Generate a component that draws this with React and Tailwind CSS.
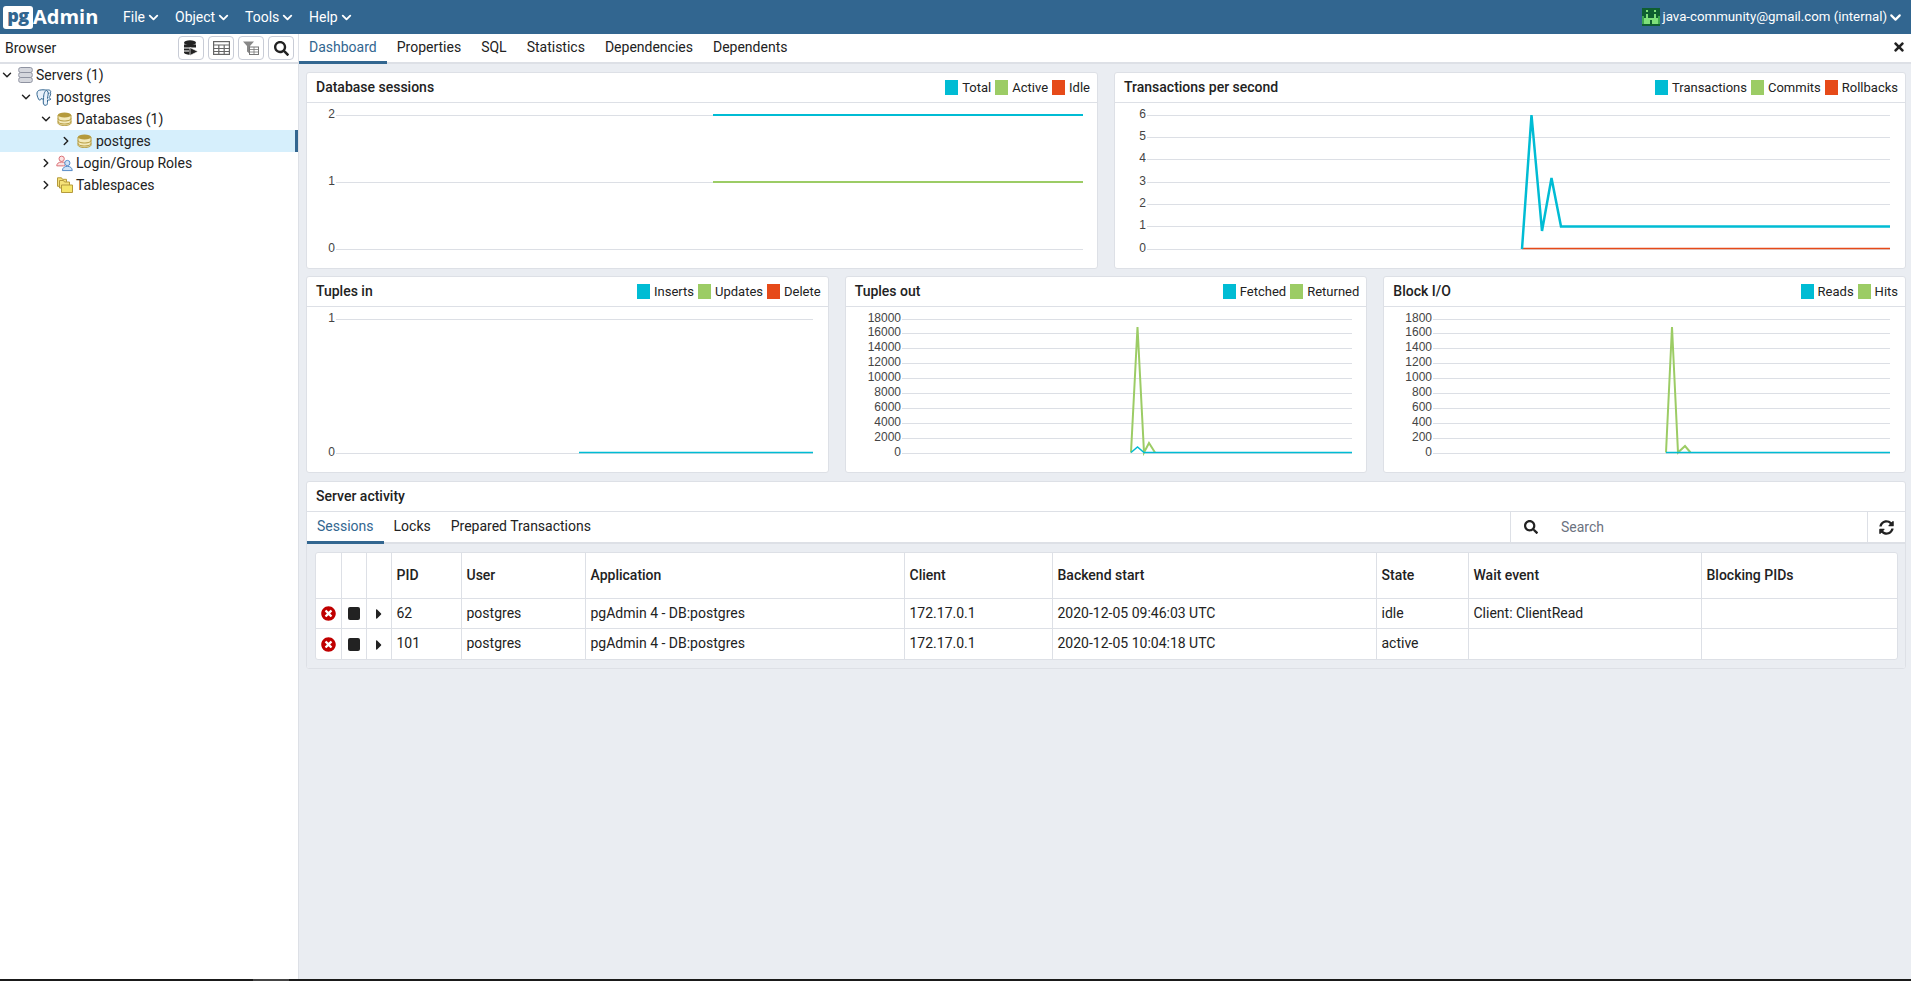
import React from "react";
import { ChevronDown, ChevronRight } from "lucide-react";
import { FaSearch, FaSyncAlt, FaTimes, FaTimesCircle, FaCaretRight } from "react-icons/fa";

const CYAN = "#00bcd4";
const GREEN = "#9ccc65";
const RED = "#e64a19";

function ServersIcon() {
  return (
    <svg width="15" height="16" viewBox="0 0 15 16">
      {[0.5, 5.5, 10.5].map((y) => (
        <rect key={y} x="0.7" y={y} width="13.6" height="5" rx="2" fill="#d5d7dd" stroke="#8f93a1" strokeWidth="1" />
      ))}
    </svg>
  );
}

function DbIcon() {
  return (
    <svg width="15" height="14" viewBox="0 0 15 14">
      <path d="M1 3v8c0 1.4 2.9 2.5 6.5 2.5S14 12.4 14 11V3z" fill="#f3e9ba" stroke="#b59a3c" strokeWidth="1" />
      <path d="M1 6.5c0 1.4 2.9 2.5 6.5 2.5S14 7.900 14 6.500M1 9.500c0 1.400 2.900 2.500 6.500 2.500S14 10.900 14 9.500" fill="none" stroke="#b59a3c" strokeWidth="1" />
      <ellipse cx="7.500" cy="3" rx="6.500" ry="2.500" fill="#b59a3c" />
    </svg>
  );
}

function RolesIcon() {
  return (
    <svg width="18" height="17" viewBox="0 0 18 17">
      <circle cx="6" cy="3.500" r="2.800" fill="#fbe3e3" stroke="#d9686e" strokeWidth="1" />
      <path d="M0.800 11c0-2.500 2-4 5.200-4s4 1 4.500 2.500L8 11z" fill="#fbe3e3" stroke="#d9686e" strokeWidth="1" />
      <circle cx="12" cy="8" r="2.800" fill="#cfe2f6" stroke="#4f86c6" strokeWidth="1" />
      <path d="M6.800 16c0-2.800 2-4.500 5.200-4.500s5.200 1.700 5.200 4.500z" fill="#cfe2f6" stroke="#4f86c6" strokeWidth="1" />
    </svg>
  );
}

function TablespaceIcon() {
  return (
    <svg width="16" height="16" viewBox="0 0 16 16">
      <path d="M0.500 0.800h4l1 1.500h4v7h-9z" fill="#f6e27a" stroke="#b59a3c" />
      <path d="M2.500 3.500h4l1 1.500h5v6h-10z" fill="#f6e27a" stroke="#b59a3c" />
      <path d="M4.500 8h11v7.500h-11z" fill="#f5e56b" stroke="#b59a3c" />
    </svg>
  );
}

function ElephantIcon() {
  return (
    <svg width="17" height="17" viewBox="0 0 17 17" fill="#eaf2fb" stroke="#336791" strokeWidth="1">
      <path d="M3.500 1.200C1.600 1.600.7 3.200 1 5.500c.3 2 1.200 4.500 2.300 5.500.8.700 1.500-.2 2-1.500.8.500 1.500.6 2 .5V14c0 1.500 1 2.500 2.500 2.300 1.300-.2 1.700-1.200 1.700-2.800v-2.500c1.500.3 3-.2 3.500-1-1-.2-1.700-.6-1.800-1.500 1-1.500 1.800-3.500 1.300-5.300C15.500 1.300 12.500.4 10.500 1.200 8.500.6 5.500.7 3.500 1.200z" />
      <path d="M10.500 1.200C8.500 2.500 7.500 5 7.500 10.500M10.500 1.200c1.500 1 2 3 1.500 5-.2 1-.5 2-.5 3.500" fill="none" />
      <circle cx="12.800" cy="4.300" r="0.700" fill="#336791" stroke="none" />
    </svg>
  );
}

function Avatar() {
  return (
    <svg width="18" height="18" viewBox="0 0 9 9" shapeRendering="crispEdges">
      <rect width="9" height="9" fill="#0f5f30" />
      <rect x="2" y="1" width="1" height="1" fill="#7fe07a" />
      <rect x="6" y="1" width="1" height="1" fill="#7fe07a" />
      <rect x="2" y="3" width="1" height="2" fill="#7fe07a" />
      <rect x="6" y="3" width="1" height="2" fill="#7fe07a" />
      <rect x="1" y="5" width="7" height="3" fill="#7fe07a" />
      <rect x="4" y="6" width="1" height="3" fill="#0f5f30" />
      <rect x="0" y="4" width="1" height="4" fill="#3fa84f" />
      <rect x="8" y="4" width="1" height="4" fill="#3fa84f" />
    </svg>
  );
}

function ToolBtn({ children }) {
  return (
    <div className="w-[26px] h-[24px] border border-[#c8ccd6] rounded-[4px] bg-white flex items-center justify-center">
      {children}
    </div>
  );
}

function TreeRow({ level, open, icon, label, selected }) {
  const Chev = open ? ChevronDown : ChevronRight;
  const pad = [0, 19, 39, 59][level];
  return (
    <div
      className={`h-[22px] flex items-center relative ${selected ? "bg-[#d6effc]" : ""}`}
      style={{ paddingLeft: pad }}
    >
      <Chev size={14} strokeWidth={2.5} className="text-[#222] shrink-0" />
      <div className="w-[17px] ml-[3px] shrink-0 flex justify-center">{icon}</div>
      <span className={level === 0 ? "ml-[2px]" : "ml-[3px]"}>{label}</span>
      {selected && <div className="absolute right-0 top-0 bottom-0 w-[3px] bg-[#326690]" />}
    </div>
  );
}

function Legend({ items }) {
  return (
    <div className="flex items-center gap-[4px] text-[13px]">
      {items.map(([name, color]) => (
        <div key={name} className="flex items-center gap-[4px]">
          <span className="w-[13px] h-[15px] block" style={{ background: color }} />
          <span>{name}</span>
        </div>
      ))}
    </div>
  );
}

function Chart({ ox, oy, w, left, right, grid, lines }) {
  return (
    <svg width={w} height="165" viewBox={`${ox} ${oy} ${w} 165`} className="block">
      {grid.map(([y, label]) => (
        <g key={label}>
          <line x1={left} x2={right} y1={y} y2={y} stroke="#dcdfe5" strokeWidth="1" />
          <text x={left - 1} y={y + 2} textAnchor="end" fontFamily="'Liberation Sans', sans-serif" fontSize="12" fill="#444">
            {label}
          </text>
        </g>
      ))}
      {lines.map(([color, pts, width], i) => (
        <polyline key={i} points={pts} fill="none" stroke={color} strokeWidth={width || 1.5} strokeLinejoin="miter" />
      ))}
    </svg>
  );
}

function Card({ title, legend, className, children }) {
  return (
    <div className={`bg-white rounded-[3px] border border-[#dde0e6] overflow-hidden ${className}`}>
      <div className="h-[30px] border-b border-[#dde0e6] flex items-center justify-between pl-[9px] pr-[7px]">
        <span className="font-medium">{title}</span>
        {legend && <Legend items={legend} />}
      </div>
      {children}
    </div>
  );
}

function Tab({ label, active }) {
  return (
    <div
      className={`px-[10px] flex items-center -mb-[2px] border-b-[3px] ${active ? "text-[#326690] border-[#326690]" : "border-transparent"}`}
    >
      {label}
    </div>
  );
}

const thousands = [319, 333, 348, 363, 378, 393, 408, 423, 438, 453];

function App() {
  return (
    <div className="h-[981px] w-[1911px] overflow-hidden flex flex-col font-['Roboto',sans-serif] text-[14px] text-[#222] bg-white">
      {/* top menu */}
      <div className="h-[34px] bg-[#326690] flex items-center text-white shrink-0">
        <div className="flex items-center ml-[3px] w-[120px]">
          <div className="w-[30px] h-[23px] bg-white rounded-[3px] text-[#326690] font-['Open_Sans',sans-serif] font-extrabold text-[18px] leading-[19px] text-center tracking-[-0.5px]">
            pg
          </div>
          <span className="font-['Open_Sans',sans-serif] font-bold text-[20px] leading-none">Admin</span>
        </div>
        {[
          ["File", "w-[52px]"],
          ["Object", "w-[70px]"],
          ["Tools", "w-[64px]"],
          ["Help", "w-[60px]"],
        ].map(([name, w]) => (
          <div key={name} className={`flex items-center gap-[1px] ${w}`}>
            <span>{name}</span>
            <ChevronDown size={15} strokeWidth={3} />
          </div>
        ))}
        <div className="ml-auto flex items-center pr-[7px] text-[13.25px]">
          <Avatar />
          <span className="ml-[3px]">java-community@gmail.com (internal)</span>
          <ChevronDown size={17} strokeWidth={3} />
        </div>
      </div>

      <div className="flex flex-1 min-h-0">
        {/* browser panel */}
        <div className="w-[299px] shrink-0 border-r border-[#dde0e6] flex flex-col">
          <div className="h-[30px] border-b-2 border-[#dde0e6] flex items-center justify-between pl-[5px] pr-[4px]">
            <span>Browser</span>
            <div className="flex gap-[4px]">
              <ToolBtn>
                <svg width="16" height="16" viewBox="0 0 16 16">
                  <ellipse cx="7" cy="2.800" rx="6" ry="2.500" fill="#222" />
                  <path d="M1 4.500v8c0 1.200 2.600 2.200 6 2.200h0V4.500z M7 4.500h6v3H7z" fill="#222" />
                  <path d="M1 8h6M1 11h5" stroke="#fff" strokeWidth="1" />
                  <path d="M7 7.500l8 4-8 4z" fill="#222" stroke="#fff" strokeWidth="0.700" />
                </svg>
              </ToolBtn>
              <ToolBtn>
                <svg width="17" height="14" viewBox="0 0 17 14" fill="none" stroke="#666" strokeWidth="1.200">
                  <rect x="0.600" y="0.600" width="15.800" height="12.800" />
                  <path d="M0.600 4h15.800M0.600 7.500h15.800M0.600 10.500h15.800M5.800 4v9.400M11.200 4v9.400" />
                </svg>
              </ToolBtn>
              <ToolBtn>
                <svg width="16" height="14" viewBox="0 0 16 14">
                  <path d="M0 0.500h11L7 5v8L4 10.500V5z" fill="#888" />
                  <rect x="6.500" y="6" width="9" height="7.500" fill="#fff" stroke="#777" />
                  <path d="M6.500 8.500h9M6.500 11h9M11 6v7.500" stroke="#777" strokeWidth="0.800" />
                </svg>
              </ToolBtn>
              <ToolBtn>
                <FaSearch size={15} className="text-[#222]" />
              </ToolBtn>
            </div>
          </div>
          <div>
            <TreeRow level={0} open icon={<ServersIcon />} label="Servers (1)" />
            <TreeRow level={1} open icon={<ElephantIcon />} label="postgres" />
            <TreeRow level={2} open icon={<DbIcon />} label="Databases (1)" />
            <TreeRow level={3} icon={<DbIcon />} label="postgres" selected />
            <TreeRow level={2} icon={<RolesIcon />} label="Login/Group Roles" />
            <TreeRow level={2} icon={<TablespaceIcon />} label="Tablespaces" />
          </div>
        </div>

        {/* dashboard */}
        <div className="flex-1 min-w-0 flex flex-col bg-[#eaedf2]">
          <div className="h-[30px] bg-white border-b-2 border-[#dde0e6] flex items-stretch relative shrink-0">
            {["Dashboard", "Properties", "SQL", "Statistics", "Dependencies", "Dependents"].map((t, i) => (
              <Tab key={t} label={t} active={i === 0} />
            ))}
            <FaTimes size={14} className="absolute right-[5px] top-[6px] text-[#222]" />
          </div>

          <div className="flex flex-col gap-[7px] pt-[8px] pl-[7px] pr-[5px]">
            <div className="flex gap-[16px]">
              <Card
                title="Database sessions"
                className="flex-1"
                legend={[["Total", CYAN], ["Active", GREEN], ["Idle", RED]]}
              >
                <Chart
                  ox={307}
                  oy={103}
                  w={790}
                  left={336}
                  right={1083}
                  grid={[[115.500, "2"], [182.500, "1"], [249.500, "0"]]}
                  lines={[
                    [CYAN, "713,115 1083,115", 2],
                    [GREEN, "713,182 1083,182", 2],
                  ]}
                />
              </Card>
              <Card
                title="Transactions per second"
                className="flex-1"
                legend={[["Transactions", CYAN], ["Commits", GREEN], ["Rollbacks", RED]]}
              >
                <Chart
                  ox={1115}
                  oy={103}
                  w={790}
                  left={1147}
                  right={1890}
                  grid={[
                    [115.500, "6"],
                    [137.500, "5"],
                    [159.500, "4"],
                    [182.500, "3"],
                    [204.500, "2"],
                    [226.500, "1"],
                    [249.500, "0"],
                  ]}
                  lines={[
                    [RED, "1522,248.500 1890,248.500"],
                    [CYAN, "1522,249 1531.500,115 1542,231 1551.500,178 1561,226.500 1890,226.500", 2.5],
                  ]}
                />
              </Card>
            </div>

            <div className="flex gap-[16px]">
              <Card title="Tuples in" className="flex-1" legend={[["Inserts", CYAN], ["Updates", GREEN], ["Delete", RED]]}>
                <Chart
                  ox={307}
                  oy={307}
                  w={521}
                  left={336}
                  right={813}
                  grid={[[319.500, "1"], [453.500, "0"]]}
                  lines={[[CYAN, "579,452.500 813,452.500"]]}
                />
              </Card>
              <Card title="Tuples out" className="flex-1" legend={[["Fetched", CYAN], ["Returned", GREEN]]}>
                <Chart
                  ox={846}
                  oy={307}
                  w={521}
                  left={902}
                  right={1352}
                  grid={thousands.map((y, i) => [y + 0.5, String((9 - i) * 2000)])}
                  lines={[
                    [GREEN, "1131,452.500 1137.500,327 1144,452.500 1149,443 1155,452.500", 2],
                    [CYAN, "1131,452.500 1137.500,447 1144,452.500 1352,452.500"],
                  ]}
                />
              </Card>
              <Card title="Block I/O" className="flex-1" legend={[["Reads", CYAN], ["Hits", GREEN]]}>
                <Chart
                  ox={1385}
                  oy={307}
                  w={521}
                  left={1434}
                  right={1891}
                  grid={thousands.map((y, i) => [y + 0.5, String((9 - i) * 200)])}
                  lines={[
                    [GREEN, "1667,452.500 1673,327 1679,452.500 1686,446 1691.500,452.500", 2],
                    [CYAN, "1667,452.500 1891,452.500"],
                  ]}
                />
              </Card>
            </div>

            <div className="bg-white rounded-[3px] border border-[#dde0e6] h-[188px] mt-[1px] flex flex-col overflow-hidden">
              <div className="h-[30px] border-b border-[#dde0e6] flex items-center pl-[9px] font-medium shrink-0">
                Server activity
              </div>
              <div className="h-[32px] flex items-stretch border-b-2 border-[#dde0e6] shrink-0">
                {["Sessions", "Locks", "Prepared Transactions"].map((t, i) => (
                  <Tab key={t} label={t} active={i === 0} />
                ))}
                <div className="ml-auto w-[357px] flex items-center border-l border-[#dde0e6]">
                  <FaSearch size={14} className="ml-[13px] text-[#222]" />
                  <span className="ml-[23px] text-[#6b7280]">Search</span>
                </div>
                <div className="w-[38px] flex items-center justify-center border-l border-[#dde0e6]">
                  <FaSyncAlt size={15} className="text-[#222]" />
                </div>
              </div>
              <div className="flex-1 bg-[#eaedf2] pt-[8px] pl-[8px] pr-[7px]">
                <div className="bg-white border border-[#dde0e6] rounded-[3px] overflow-hidden">
                  <table className="table-fixed border-collapse w-full">
                    <colgroup>
                      {[25, 25, 25, 70, 124, 319, 148, 324, 92, 233, 198].map((w, i) => (
                        <col key={i} style={{ width: w }} />
                      ))}
                    </colgroup>
                    <thead>
                      <tr className="h-[45px] text-left font-medium">
                        {["", "", "", "PID", "User", "Application", "Client", "Backend start", "State", "Wait event", "Blocking PIDs"].map((h, i) => (
                          <th key={i} className="border-l first:border-l-0 border-[#dde0e6] pl-[5px] font-medium">
                            {h}
                          </th>
                        ))}
                      </tr>
                    </thead>
                    <tbody>
                      {[
                        ["62", "2020-12-05 09:46:03 UTC", "idle", "Client: ClientRead"],
                        ["101", "2020-12-05 10:04:18 UTC", "active", ""],
                      ].map(([pid, start, state, wait]) => (
                        <tr key={pid} className="h-[30px] last:h-[31px] border-t border-[#dde0e6]">
                          <td className="text-center">
                            <FaTimesCircle size={15} className="text-[#c00000] inline-block" />
                          </td>
                          <td className="border-l border-[#dde0e6] text-center">
                            <span className="inline-block w-[12px] h-[13px] bg-[#222] rounded-[2px] align-middle" />
                          </td>
                          <td className="border-l border-[#dde0e6] text-center">
                            <FaCaretRight size={16} className="inline-block text-[#222]" />
                          </td>
                          <td className="border-l border-[#dde0e6] pl-[5px]">{pid}</td>
                          <td className="border-l border-[#dde0e6] pl-[5px]">postgres</td>
                          <td className="border-l border-[#dde0e6] pl-[5px]">pgAdmin 4 - DB:postgres</td>
                          <td className="border-l border-[#dde0e6] pl-[5px]">172.17.0.1</td>
                          <td className="border-l border-[#dde0e6] pl-[5px]">{start}</td>
                          <td className="border-l border-[#dde0e6] pl-[5px]">{state}</td>
                          <td className="border-l border-[#dde0e6] pl-[5px]">{wait}</td>
                          <td className="border-l border-[#dde0e6]"></td>
                        </tr>
                      ))}
                    </tbody>
                  </table>
                </div>
              </div>
            </div>
          </div>
        </div>
      </div>

      {/* bottom edge of the window */}
      <div className="h-[2px] bg-[#1a1a1a] shrink-0 flex">
        <div className="ml-[253px] w-[36px] bg-[#444]" />
      </div>
    </div>
  );
}

export default App;
